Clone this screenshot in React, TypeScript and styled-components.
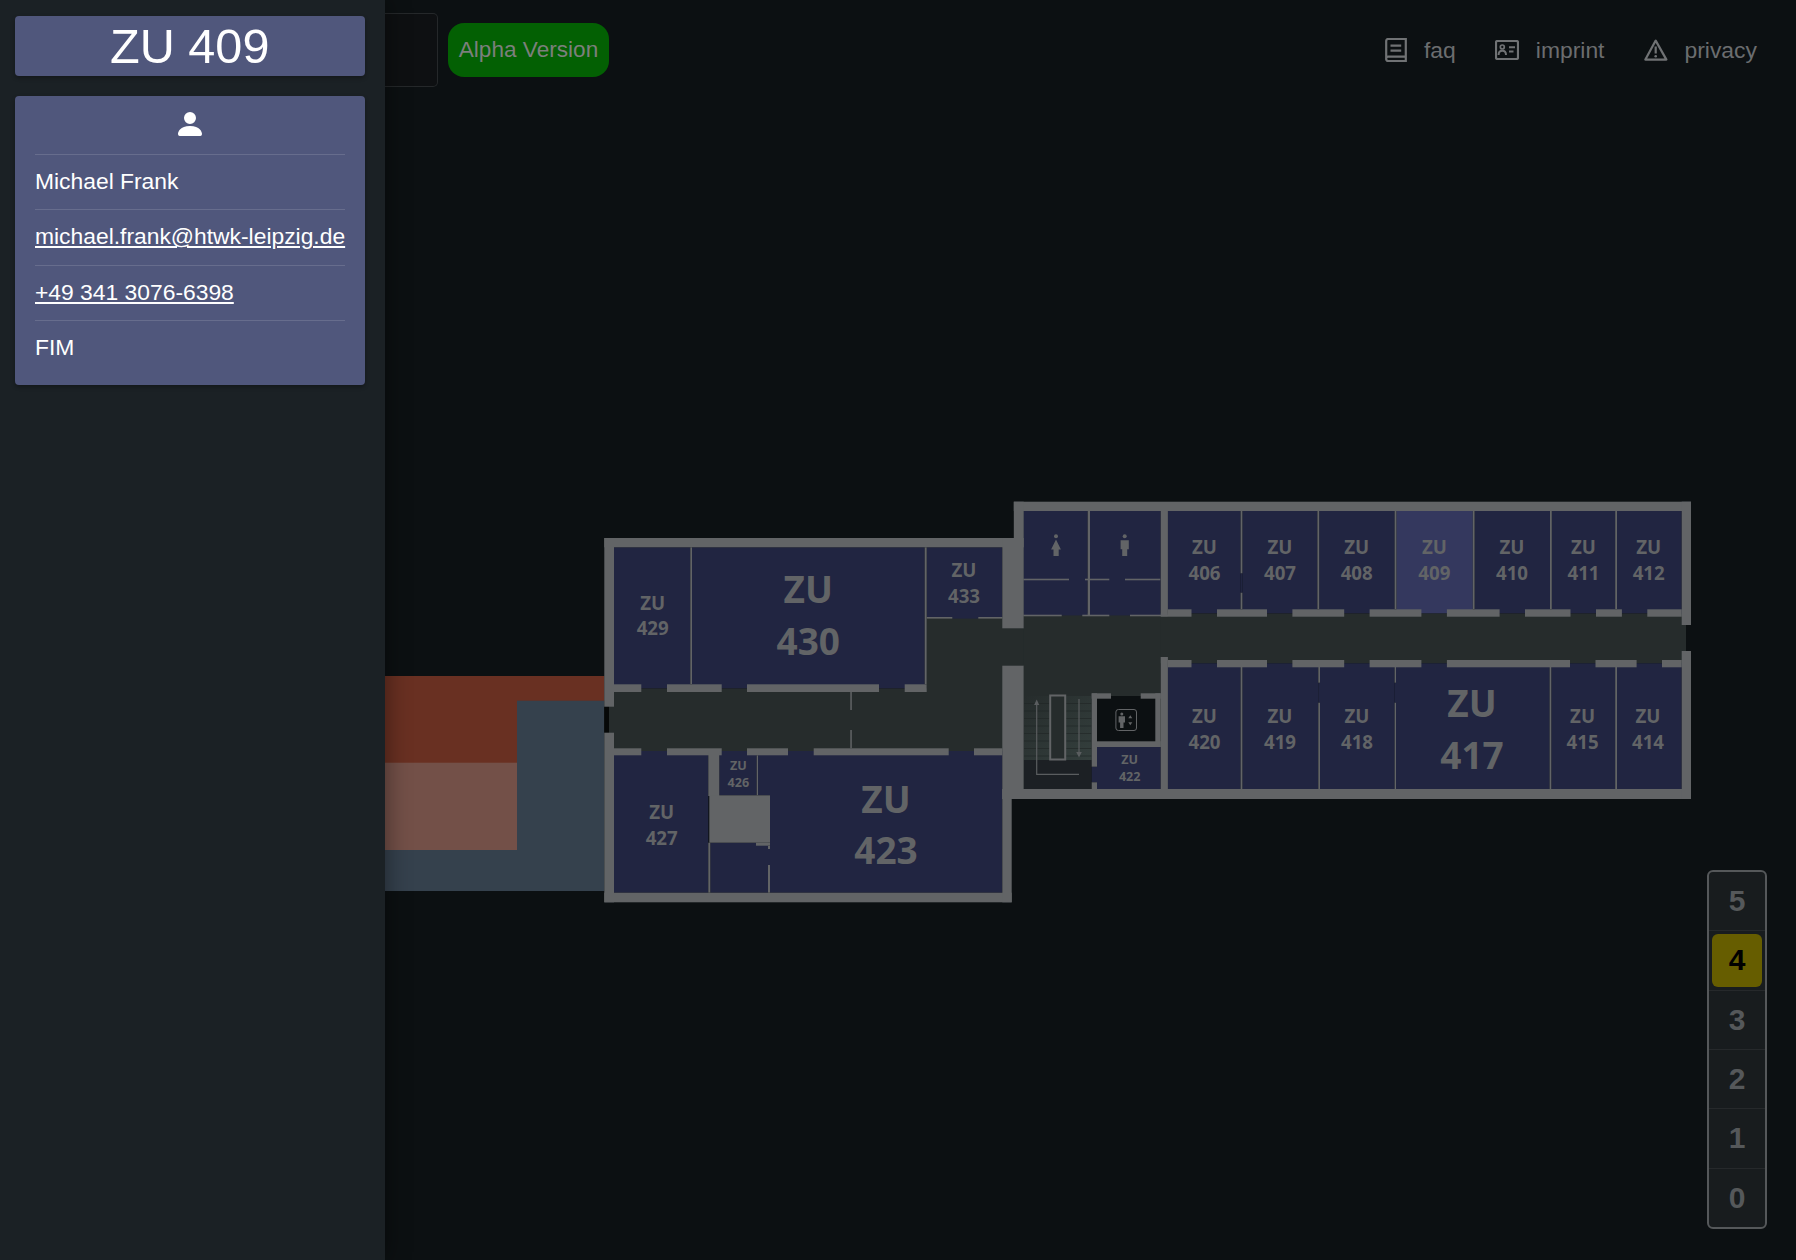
import React from "react";
import styled, { createGlobalStyle } from "styled-components";

type Box = [number, number, number, number];

const WALL = "#626466";
const ROOM = "#212541";
const ROOM_ACTIVE = "#34385e";
const HALL = "#262c2c";
const ICON = "#707274";

// rooms, all coordinates are page pixels [x1, y1, x2, y2]
const rooms: Box[] = [
  [614, 547.3, 690.3, 688.3],
  [692, 547.3, 924.7, 688.3],
  [926.7, 547.3, 1002.3, 617],
  [952.3, 617, 978.3, 618.6],
  [614, 751, 708.3, 892.7],
  [719.3, 751, 756.7, 795.3],
  [758, 751, 1002.3, 795.3],
  [770, 751, 1002.3, 892.7],
  [710.3, 842.7, 768, 892.7],
  [768, 849, 770, 865],
  [1023.3, 511, 1087.7, 615.4],
  [1090, 511, 1160.7, 615.4],
  [1167.9, 511, 1240.6, 613.3],
  [1240.6, 573.3, 1242.4, 592.7],
  [1242.4, 511, 1317.4, 613.3],
  [1319.2, 511, 1394.6, 613.3],
  [1474.6, 511, 1550, 613.3],
  [1551.8, 511, 1615.2, 613.3],
  [1617, 511, 1681.7, 613.3],
  [1167.9, 663.3, 1240.6, 789],
  [1242.4, 663.3, 1318.3, 789],
  [1318.3, 682.7, 1320, 702.7],
  [1320, 663.3, 1394.6, 789],
  [1394.6, 682.7, 1396, 702.7],
  [1396, 663.3, 1549.6, 789],
  [1551.3, 663.3, 1615.2, 789],
  [1617, 663.3, 1681.7, 789],
  [1097, 747, 1160.7, 789],
  [1091.7, 766.7, 1097, 782.3],
];

const halls: Box[] = [
  [609, 688.3, 1003, 751],
  [926.7, 617, 1003, 689],
  [1002, 628, 1024, 666],
  [1023.7, 613.3, 1686, 663.3],
  [1023.7, 613.3, 1160.7, 696],
];

const walls: Box[] = [
  // outer shell, left wing
  [604.3, 538, 1023.7, 547.3],
  [604.3, 892.7, 1011.7, 902.3],
  [604.3, 538, 614, 706.7],
  [604.3, 732.7, 614, 902.3],
  [1002.3, 538, 1023.7, 628.3],
  [1002.3, 665.7, 1023.7, 799],
  [1002.3, 789, 1011.7, 902.3],
  // outer shell, right wing
  [1013.8, 501.7, 1691, 511],
  [1013.8, 501.7, 1023.7, 538],
  [1002.3, 789, 1691, 799],
  [1681.7, 501.7, 1691, 625],
  [1681.7, 651, 1691, 799],
  // corridor edge, left wing
  [614, 684.3, 641.3, 692],
  [667, 684.3, 721.7, 692],
  [747, 684.3, 879, 692],
  [904.7, 684.3, 926.7, 692],
  [614, 748.3, 641.3, 755.3],
  [667, 748.3, 721.7, 755.3],
  [747, 748.3, 788, 755.3],
  [813.7, 748.3, 948.7, 755.3],
  [974, 748.3, 1002.3, 755.3],
  // corridor edge, right wing
  [1167.9, 609.3, 1191.5, 616.7],
  [1217, 609.3, 1267, 616.7],
  [1292.4, 609.3, 1344.2, 616.7],
  [1369.6, 609.3, 1421.4, 616.7],
  [1446.9, 609.3, 1499.6, 616.7],
  [1525, 609.3, 1570.5, 616.7],
  [1596, 609.3, 1621.9, 616.7],
  [1647.3, 609.3, 1681.7, 616.7],
  [1167.9, 660, 1191.5, 667.3],
  [1217, 660, 1267, 667.3],
  [1292.4, 660, 1344.2, 667.3],
  [1369.6, 660, 1421.4, 667.3],
  [1446.9, 660, 1570, 667.3],
  [1595.5, 660, 1636.6, 667.3],
  [1662, 660, 1681.7, 667.3],
  // thick inner walls
  [1160.7, 511, 1167.9, 616.7],
  [1160.7, 657, 1167.9, 789],
  [708.3, 751, 719.3, 796],
  [709.3, 795.3, 770, 842.7],
  [756, 842.7, 770, 845.7],
  // lift shaft
  [1091.7, 693.3, 1097, 766.7],
  [1091.7, 782.3, 1097, 789],
  [1091.7, 693.3, 1111, 698.7],
  [1140.7, 693.3, 1160.7, 698.7],
  [1155.3, 693.3, 1160.7, 747],
  [1097, 741.3, 1160.7, 747],
];

// thin partitions
const thin: Box[] = [
  [690.3, 547.3, 692, 684.3],
  [924.7, 547.3, 926.7, 684.3],
  [926.7, 617, 952.3, 618.6],
  [978.3, 617, 1002.3, 618.6],
  [850.3, 692, 851.8, 710],
  [850.3, 730, 851.8, 748.3],
  [756.7, 755.3, 758, 795.3],
  [708.3, 842.7, 710.3, 892.7],
  [768, 845.7, 770, 849],
  [768, 865, 770, 892.7],
  [1087.7, 511, 1090, 615],
  [1023.3, 578.7, 1069, 580.3],
  [1085, 578.7, 1109.3, 580.3],
  [1125, 578.7, 1160.3, 580.3],
  [1023.3, 614.7, 1061.7, 616.3],
  [1082.3, 614.7, 1109.3, 616.3],
  [1130, 614.7, 1168, 616.3],
  [1240.6, 511, 1242.4, 573.3],
  [1240.6, 592.7, 1242.4, 609.3],
  [1317.4, 511, 1319.2, 609.3],
  [1394.6, 511, 1396.4, 609.3],
  [1472.8, 511, 1474.6, 609.3],
  [1550, 511, 1551.8, 609.3],
  [1615.2, 511, 1617, 609.3],
  [1240.6, 667, 1242.4, 789],
  [1318.3, 667, 1320, 682.7],
  [1318.3, 702.7, 1320, 789],
  [1394.6, 667, 1396, 682.7],
  [1394.6, 702.7, 1396, 789],
  [1549.6, 667, 1551.3, 789],
  [1615.2, 667, 1617, 789],
];

// room labels: x, y of the ZU line, y of the number line, font size
const labels: { no: string; x: number; zu: number; num: number; size: number }[] = [
  { no: "429", x: 652.7, zu: 602.7, num: 628.3, size: 18.7 },
  { no: "430", x: 808.3, zu: 589.3, num: 641, size: 37 },
  { no: "433", x: 964, zu: 570, num: 595.7, size: 18.7 },
  { no: "427", x: 661.7, zu: 812.3, num: 837.7, size: 18.7 },
  { no: "426", x: 738.3, zu: 766, num: 783, size: 12.6 },
  { no: "423", x: 886, zu: 799, num: 850.7, size: 37 },
  { no: "422", x: 1129.7, zu: 760, num: 776.7, size: 12.6 },
  { no: "406", x: 1204.5, zu: 546.7, num: 572.7, size: 18.7 },
  { no: "407", x: 1280, zu: 546.7, num: 572.7, size: 18.7 },
  { no: "408", x: 1356.7, zu: 546.7, num: 572.7, size: 18.7 },
  { no: "409", x: 1434.4, zu: 546.7, num: 572.7, size: 18.7 },
  { no: "410", x: 1512, zu: 546.7, num: 572.7, size: 18.7 },
  { no: "411", x: 1583.5, zu: 546.7, num: 572.7, size: 18.7 },
  { no: "412", x: 1648.7, zu: 546.7, num: 572.7, size: 18.7 },
  { no: "420", x: 1204.5, zu: 716.3, num: 742, size: 18.7 },
  { no: "419", x: 1280, zu: 716.3, num: 742, size: 18.7 },
  { no: "418", x: 1357, zu: 716.3, num: 742, size: 18.7 },
  { no: "417", x: 1472, zu: 703.3, num: 755, size: 37 },
  { no: "415", x: 1582.6, zu: 716.3, num: 742, size: 18.7 },
  { no: "414", x: 1648, zu: 716.3, num: 742, size: 18.7 },
];

const stairSteps = [703, 710.5, 718, 725.5, 733, 740.5, 748, 755.5];
const floors = ["5", "4", "3", "2", "1", "0"];

const Rects = ({ items, fill }: { items: Box[]; fill: string }) => (
  <>
    {items.map(([x1, y1, x2, y2], i) => (
      <rect key={i} x={x1} y={y1} width={x2 - x1} height={y2 - y1} fill={fill} />
    ))}
  </>
);

const BookIcon = () => (
  <svg width="22" height="24" viewBox="0 0 22 24" fill="none" stroke={ICON} strokeWidth="2.2">
    <path d="M1.2 20.5V3a2 2 0 0 1 2-2h17.6v22H3.2a2 2 0 0 1-2-2.5a2 2 0 0 1 2-1.9h17.6" />
    <path d="M5.5 7.6h10.7M5.5 12.6h10.7" />
  </svg>
);

const CardIcon = () => (
  <svg width="24" height="20" viewBox="0 0 24 20" fill="none" stroke={ICON} strokeWidth="2.2">
    <rect x="1" y="1" width="22" height="18" rx="1.5" />
    <circle cx="7.3" cy="7" r="2" strokeWidth="1.7" />
    <path d="M3.6 15c0-3 1.6-4.2 3.7-4.2S11 12 11 15" strokeWidth="2" />
    <path d="M14 7.2h6M14 11.4h4.5" strokeWidth="2" />
  </svg>
);

const WarningIcon = () => (
  <svg width="24" height="22" viewBox="0 0 24 22" fill="none" stroke={ICON} strokeWidth="2.2">
    <path d="M11.7 1.6 1.4 20.6h21z" strokeLinejoin="round" />
    <path d="M11.7 7.5v7" />
    <circle cx="11.7" cy="17.2" r="1.3" fill={ICON} stroke="none" />
  </svg>
);

const PersonIcon = () => (
  <svg width="32" height="32" viewBox="0 0 16 16" fill="#ffffff">
    <path d="M3 14s-1 0-1-1 1-4 6-4 6 3 6 4-1 1-1 1H3Zm5-6a3 3 0 1 0 0-6 3 3 0 0 0 0 6Z" />
  </svg>
);

const FloorPlan = () => (
  <PlanSvg viewBox="385 490 1315 420" width="1315" height="420">
    <defs>
      <linearGradient id="stairs" x1="0" y1="0" x2="1" y2="1">
        <stop offset="0" stopColor="#262c2c" />
        <stop offset="1" stopColor="#343f3d" />
      </linearGradient>
    </defs>

    {/* neighbouring building */}
    <rect x="385" y="676" width="219.3" height="215" fill="#35414d" />
    <rect x="385" y="676" width="219.3" height="24.7" fill="#693022" />
    <rect x="385" y="700" width="132" height="63" fill="#693022" />
    <rect x="385" y="762.7" width="132" height="87.3" fill="#735048" />

    <rect x="604.3" y="706.7" width="5" height="26" fill="#060808" />
    <Rects items={halls} fill={HALL} />

    {/* stairs */}
    <rect x="1023.7" y="696" width="68" height="64" fill="url(#stairs)" />
    <rect x="1023.7" y="760" width="68" height="29" fill="#1c2024" />
    {stairSteps.map((y) => (
      <rect key={y} x="1023.7" y={y} width="68" height="1" fill="#1f2525" opacity="0.6" />
    ))}
    <rect x="1050.2" y="695.5" width="15" height="64" fill={HALL} stroke={WALL} strokeWidth="2" />
    <path d="M1036.7 702v72.3h42.3M1079 699v56" fill="none" stroke="#5a5d5f" strokeWidth="1.2" />
    <path d="M1036.7 699.5l-2.6 5.5h5.2zM1079 757.5l-2.8-5.5h5.6z" fill="#5a5d5f" />

    <Rects items={rooms} fill={ROOM} />
    <rect x="1396.4" y="511" width="76.4" height="102.3" fill={ROOM_ACTIVE} />

    {/* lift */}
    <rect x="1097" y="696" width="58.3" height="45.3" fill="#0c1012" />
    <rect x="1115.9" y="709.5" width="20.6" height="21" rx="2.5" fill="none" stroke={WALL} strokeWidth="1" />
    <circle cx="1121.8" cy="714" r="1.5" fill={WALL} />
    <path d="M1118.6 716.3h6.4v6.2h-1.5v5.5h-3.4v-5.5h-1.5z" fill={WALL} />
    <path d="M1130.3 715.2l-2 3h4zM1130.3 725.2l-2-3h4z" fill={WALL} />

    <Rects items={walls} fill={WALL} />
    <Rects items={thin} fill={WALL} />

    {/* toilets */}
    <circle cx="1056" cy="536.3" r="2" fill={WALL} />
    <path d="M1056 539.5l4.9 10h-2.2v6.5h-5.2v-6.5h-2.4z" fill={WALL} />
    <circle cx="1124.7" cy="536.3" r="2" fill={WALL} />
    <path d="M1120.6 540.3h8.2v9h-1.6v6.7h-5v-6.7h-1.6z" fill={WALL} />

    {labels.map((l) => (
      <g key={l.no}>
        <RoomText x={l.x} y={l.zu - l.size * 0.02} fontSize={l.size}>
          ZU
        </RoomText>
        <RoomText x={l.x} y={l.num - l.size * 0.02} fontSize={l.size}>
          {l.no}
        </RoomText>
      </g>
    ))}
  </PlanSvg>
);

export default function App() {
  return (
    <Page>
      <GlobalStyle />
      <Sidebar>
        <TitleCard>ZU 409</TitleCard>
        <InfoCard>
          <IconRow>
            <PersonIcon />
          </IconRow>
          <InfoRow>Michael Frank</InfoRow>
          <InfoRow>
            <InfoLink href="#">michael.frank@htwk-leipzig.de</InfoLink>
          </InfoRow>
          <InfoRow>
            <InfoLink href="#">+49 341 3076-6398</InfoLink>
          </InfoRow>
          <InfoRow>FIM</InfoRow>
        </InfoCard>
      </Sidebar>
      <Main>
        <FloorPlan />
        <TopBar>
          <LeftGroup>
            <GhostBox />
            <AlphaBadge>Alpha Version</AlphaBadge>
          </LeftGroup>
          <NavList>
            <NavItem href="#">
              <BookIcon />
              faq
            </NavItem>
            <NavItem href="#">
              <CardIcon />
              imprint
            </NavItem>
            <NavItem href="#">
              <WarningIcon />
              privacy
            </NavItem>
          </NavList>
        </TopBar>
        <FloorPicker>
          {floors.map((f) => (
            <FloorCell key={f}>
              <FloorButton $active={f === "4"}>{f}</FloorButton>
            </FloorCell>
          ))}
        </FloorPicker>
      </Main>
    </Page>
  );
}

const GlobalStyle = createGlobalStyle`
  html, body {
    margin: 0;
    padding: 0;
    background: #0c1012;
    overflow: hidden;
  }
  * {
    box-sizing: border-box;
  }
`;

const Page = styled.div`
  display: flex;
  width: 1796px;
  height: 1260px;
  font-family: "Liberation Sans", Arial, sans-serif;
  background: #0c1012;
`;

const Sidebar = styled.aside`
  position: relative;
  z-index: 2;
  flex: 0 0 385px;
  min-width: 0;
  display: flex;
  flex-direction: column;
  gap: 20px;
  padding: 16px 20.5px 0 15px;
  background: #1b2125;
  box-shadow: 0 0 24px rgba(0, 0, 0, 0.45);
`;

const TitleCard = styled.div`
  height: 60px;
  border-radius: 4px;
  background: #50577c;
  color: #ffffff;
  font-size: 48.6px;
  line-height: 60px;
  text-align: center;
  box-shadow: 0 2px 4px rgba(0, 0, 0, 0.3);
`;

const InfoCard = styled.div`
  height: 289px;
  padding: 0 20px;
  border-radius: 4px;
  background: #50577c;
  color: #ffffff;
  box-shadow: 0 2px 4px rgba(0, 0, 0, 0.3);
`;

const IconRow = styled.div`
  display: flex;
  justify-content: center;
  align-items: center;
  height: 58px;
  padding-bottom: 3px;
`;

const InfoRow = styled.div`
  height: 55.4px;
  border-top: 1px solid #676d8d;
  font-size: 22.85px;
  line-height: 53.6px;
  white-space: nowrap;
`;

const InfoLink = styled.a`
  color: #ffffff;
  text-decoration: underline;
`;

const Main = styled.main`
  position: relative;
  flex: 1;
  overflow: hidden;
`;

const PlanSvg = styled.svg`
  position: absolute;
  left: 0;
  top: 490px;
`;

const RoomText = styled.text`
  fill: #626466;
  font-family: "Open Sans", "Noto Sans", sans-serif;
  font-weight: 700;
  text-anchor: middle;
  dominant-baseline: central;
`;

const TopBar = styled.header`
  position: relative;
  display: flex;
  justify-content: space-between;
  align-items: center;
  height: 100px;
  padding-right: 39px;
`;

const LeftGroup = styled.div`
  display: flex;
  align-items: center;
  gap: 10.5px;
`;

const GhostBox = styled.div`
  width: 52.5px;
  height: 74px;
  border: 1px solid #25282a;
  border-left: 0;
  border-radius: 0 5px 5px 0;
  background: #0e1012;
`;

const AlphaBadge = styled.div`
  width: 161px;
  height: 54px;
  border-radius: 16px;
  background: #036003;
  color: #7c7f7c;
  font-size: 22.6px;
  line-height: 54px;
  text-align: center;
  white-space: nowrap;
`;

const NavList = styled.nav`
  display: flex;
  align-items: center;
  gap: 39.5px;
`;

const NavItem = styled.a`
  display: flex;
  align-items: center;
  gap: 16.5px;
  color: #6b6d6f;
  font-size: 22.9px;
  line-height: 27px;
  text-decoration: none;
`;

const FloorPicker = styled.div`
  position: absolute;
  left: 1322px;
  top: 870px;
  display: flex;
  flex-direction: column;
  width: 60px;
  height: 359px;
  border: 2px solid #55585a;
  border-radius: 6px;
  background: #181c1e;
`;

const FloorCell = styled.div`
  flex: 1;
  display: flex;
  padding: 3px;
  border-top: 1px solid #26292b;
  &:first-child {
    border-top: 0;
  }
`;

const FloorButton = styled.div<{ $active?: boolean }>`
  flex: 1;
  display: flex;
  justify-content: center;
  align-items: center;
  border-radius: 6px;
  background: ${(p) => (p.$active ? "#665d00" : "transparent")};
  color: ${(p) => (p.$active ? "#000000" : "#55585a")};
  font-size: 30px;
  font-weight: 700;
`;
